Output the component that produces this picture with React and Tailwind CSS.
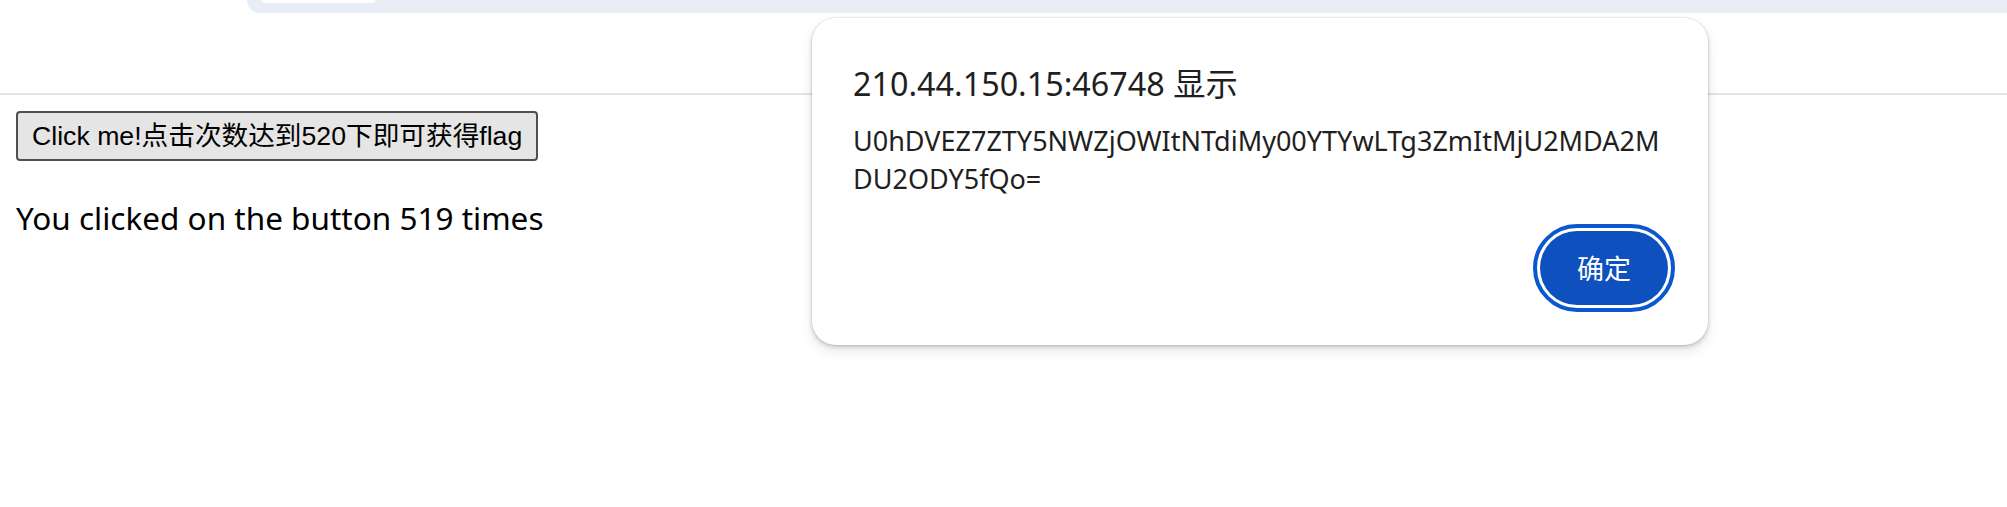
import React from 'react';

// browser-like top strip with the address bar edge
const TopStrip = () => (
  <div className="h-[95px] border-b-2 border-[#e3e3e3] flex">
    <div className="ml-[247px] flex-1 h-[13px] bg-[#e9eef6] rounded-bl-[25px] pl-[15px]">
      <div className="w-[113px] h-[3px] bg-white rounded-b-[10px]" />
    </div>
  </div>
);

const AlertDialog = () => (
  <div className="absolute left-[812px] top-[18px] w-[896px] h-[327px] bg-white rounded-[24px] shadow-[0_0_0_1px_rgba(0,0,0,0.05),0_2px_4px_rgba(0,0,0,0.18),0_6px_12px_2px_rgba(0,0,0,0.07)] pt-[44px] pl-[41px] pr-[40px] pb-[40px] flex flex-col font-['Noto_Sans','Noto_Sans_CJK_SC',sans-serif] text-[#1f1f1f]">
    <h2 className="text-[32.3px] leading-[42px] font-normal">210.44.150.15:46748 显示</h2>
    <p className="mt-[18px] text-[27px] leading-[38px]">
      U0hDVEZ7ZTY5NWZjOWItNTdiMy00YTYwLTg3ZmItMjU2MDA2M
      <br />
      DU2ODY5fQo=
    </p>
    <div className="mt-auto flex justify-end">
      <button className="w-[128px] h-[74px] rounded-full bg-[#0e50be] text-white text-[27px] outline-4 outline-offset-[3px] outline-[#0b57d0] flex items-center justify-center font-['Noto_Sans_CJK_SC',sans-serif]">
        确定
      </button>
    </div>
  </div>
);

export default function App() {
  return (
    <div className="relative w-full h-[507px] bg-white overflow-hidden">
      <TopStrip />
      <div className="px-4 pt-4">
        <button className="h-[50px] px-[14px] border-2 border-[#4f4f4f] rounded-[4px] bg-[#e5e5e5] text-black text-[26.67px] flex items-center font-['Liberation_Sans','Noto_Sans_CJK_SC',sans-serif]">
          Click me!点击次数达到520下即可获得flag
        </button>
        <p className="mt-[35px] text-[31.5px] leading-[44px] text-black font-['Noto_Sans','Noto_Sans_CJK_SC',sans-serif]">
          You clicked on the button 519 times
        </p>
      </div>
      <AlertDialog />
    </div>
  );
}
